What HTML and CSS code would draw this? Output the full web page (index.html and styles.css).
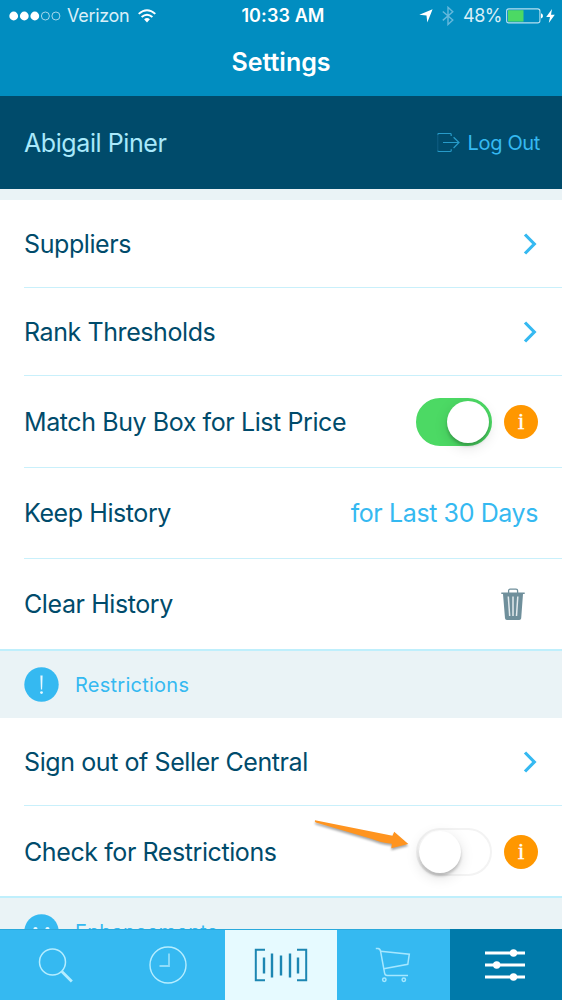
FILE: index.html
```html
<!DOCTYPE html>
<html lang="en">
<head>
  <meta charset="UTF-8">
  <title>Settings</title>
  <link rel="stylesheet" href="styles.css">
</head>
<body>
<div class="app">
  <header class="header">
    <div class="status">
      <div class="status-left">
        <svg class="signal" width="52" height="10" viewBox="0 0 52 10">
          <g fill="#fff"><circle cx="4.7" cy="5" r="4.4"/><circle cx="15.3" cy="5" r="4.4"/><circle cx="25.8" cy="5" r="4.4"/></g>
          <g fill="none" stroke="#b5dff0" stroke-width="0.9"><circle cx="36.4" cy="5" r="4"/><circle cx="46.9" cy="5" r="4"/></g>
        </svg>
        <span class="carrier">Verizon</span>
        <svg class="wifi" width="18" height="14" viewBox="0 0 18 14">
          <g fill="none" stroke="#fff" stroke-width="1.9"><path d="M0.7 4.9Q9 -2.6 17.3 4.9"/><path d="M3.6 8Q9 3.3 14.4 8"/></g>
          <path d="M6.1 10.3Q9 7.7 11.9 10.3L9 13.5z" fill="#fff"/>
        </svg>
      </div>
      <span class="time">10:33 AM</span>
      <div class="status-right">
        <svg width="14" height="14" viewBox="0 0 14 14"><path d="M13.6 0.3L8.3 13.6L7.5 6.6L0.3 5.8z" fill="#fff"/></svg>
        <svg class="bluetooth" width="12" height="20" viewBox="0 0 12 20"><path d="M0.8 5.5L10.8 14L6 18.5V1.3L10.8 5.8L0.8 14.4" fill="none" stroke="#66b9dc" stroke-width="1.4"/></svg>
        <span class="percent">48%</span>
        <svg class="battery" width="37" height="16" viewBox="0 0 37 16">
          <rect x="0.6" y="0.9" width="33.3" height="14" rx="2.2" fill="none" stroke="#b5dff0" stroke-width="1.1"/>
          <rect x="2" y="2.2" width="15.5" height="11.4" fill="#4cd964"/>
          <path d="M35 5.3Q37 6 37 7.9T35 10.5z" fill="#fff"/>
        </svg>
        <svg class="bolt" width="9" height="14" viewBox="0 0 9 14"><path d="M6 0L0.2 8H4L2.8 14L8.8 5.7H5z" fill="#fff"/></svg>
      </div>
    </div>
    <h1 class="title">Settings</h1>
  </header>

  <div class="user">
    <span class="user-name">Abigail Piner</span>
    <a class="logout">
      <svg width="23" height="20" viewBox="0 0 23 20" fill="none" stroke="#279bc9">
        <path d="M14.2 3V1.8Q14.2 0.5 13 0.5H2Q0.8 0.5 0.8 1.8M0.8 17.4Q0.8 18.5 2 18.5H13Q14.2 18.5 14.2 17.4V16.3" stroke-width="1.2"/>
        <path d="M0.8 1.8V17.4" stroke="#14638a" stroke-width="0.8"/>
        <path d="M6 9.5H22M16.6 4.2L22 9.5L16.6 15" stroke-width="1.2"/>
      </svg>
      <span>Log Out</span>
    </a>
  </div>

  <main class="list">
    <div class="row">
      <span class="label">Suppliers</span>
      <svg class="chevron" width="14" height="22" viewBox="0 0 14 22"><path d="M2 1.5L11.3 11L2 20.5"/></svg>
    </div>
    <div class="row">
      <span class="label">Rank Thresholds</span>
      <svg class="chevron" width="14" height="22" viewBox="0 0 14 22"><path d="M2 1.5L11.3 11L2 20.5"/></svg>
    </div>
    <div class="row tall">
      <span class="label">Match Buy Box for List Price</span>
      <div class="controls">
        <span class="switch on"><span class="knob"></span></span>
        <span class="info slab">i</span>
      </div>
    </div>
    <div class="row keep-row">
      <span class="label">Keep History</span>
      <span class="value">for Last 30 Days</span>
    </div>
    <div class="row last">
      <span class="label">Clear History</span>
      <svg class="trash" width="24" height="33" viewBox="0 0 24 33">
        <path d="M7.6 5V2.8Q7.6 1.2 9.2 1.2H15Q16.6 1.2 16.6 2.8V5" fill="none" stroke="#6f8f9b" stroke-width="1.3"/>
        <path d="M0.3 4.5H23.7V6H22L20.2 30.2Q20 32 18.3 32H5.9Q4.2 32 4 30.2L2 6H0.3z" fill="#6f8f9b"/>
        <path d="M7.3 8.5L8.7 28M12 8.5V28M16.8 8.5L15.5 28" stroke="#e3eaed" stroke-width="1.5"/>
      </svg>
    </div>

    <div class="section">
      <svg class="section-icon" width="35" height="35" viewBox="0 0 35 35">
        <circle cx="17.5" cy="17.5" r="17.2" fill="#35b9f1"/>
        <path d="M16.4 8.5H18.6L18.1 22.4H16.9z" fill="#e6f8ff"/>
        <circle cx="17.5" cy="25.6" r="1.4" fill="#e6f8ff"/>
      </svg>
      <span class="section-title">Restrictions</span>
    </div>
    <div class="row">
      <span class="label">Sign out of Seller Central</span>
      <svg class="chevron" width="14" height="22" viewBox="0 0 14 22"><path d="M2 1.5L11.3 11L2 20.5"/></svg>
    </div>
    <div class="row last check-row">
      <span class="label">Check for Restrictions</span>
      <div class="controls">
        <span class="switch"><span class="knob"></span></span>
        <span class="info">i</span>
      </div>
      <svg class="pointer" width="98" height="34" viewBox="0 0 98 34"><path d="M1 2.2L78.5 17.8L80.2 13.8L94.3 26L77.3 30.2L77.8 25.8Q66 24.5 58 21L1.8 4.6Q0.3 3.5 1 2.2z" fill="#ff941f"/></svg>
    </div>
    <div class="section">
      <svg class="section-icon" width="35" height="35" viewBox="0 0 35 35">
        <circle cx="17.5" cy="17.5" r="17.2" fill="#35b9f1"/>
        <circle cx="11.5" cy="15" r="2.1" fill="#e6f8ff"/><circle cx="23.5" cy="15" r="2.1" fill="#e6f8ff"/>
      </svg>
      <span class="section-title">Enhancements</span>
    </div>
  </main>

  <nav class="tabs">
    <a class="tab">
      <svg width="36" height="36" viewBox="0 0 36 36" fill="none" stroke="#b5edff"><circle cx="14.5" cy="15" r="13" stroke-width="1.5"/><path d="M23.8 24.5L33.8 34.5" stroke-width="2.8"/></svg>
    </a>
    <a class="tab">
      <svg width="38" height="38" viewBox="0 0 38 38" fill="none" stroke="#b5edff" stroke-width="1.4"><circle cx="19" cy="19" r="18"/><path d="M20 7.5V20H10.5" stroke="#8fdcfa" stroke-width="1.8"/></svg>
    </a>
    <a class="tab scan">
      <svg width="54" height="34" viewBox="0 0 54 34" fill="none" stroke="#1c86b2" stroke-width="2"><path d="M11 1.8H1.8V32.2H11M43 1.8H52.2V32.2H43"/><path d="M10 9.5V25.5M18 5.5V29.5M27 7.5V27.5M36 5.5V29.5M44 9.5V25.5" stroke-width="2.4"/></svg>
    </a>
    <a class="tab">
      <svg width="36" height="36" viewBox="0 0 36 36" fill="none" stroke="#a5e7ff" stroke-width="1.5"><path d="M0.8 1.5H3Q5.2 1.8 5.6 4.3L9.6 26.2Q10 28.5 12.2 28.5H33"/><path d="M5.6 4.2L34.3 7.2L32.8 17.3L8.7 21.7"/><circle cx="9.3" cy="32.8" r="1.7"/><circle cx="28.8" cy="32.8" r="1.7"/></svg>
    </a>
    <a class="tab current">
      <svg width="40" height="32" viewBox="0 0 40 32" fill="#fff"><path d="M0 4H40M0 16H40M0 28H40" stroke="#fff" stroke-width="3"/><circle cx="28.5" cy="4" r="3.7"/><circle cx="11.7" cy="16" r="3.7"/><circle cx="28.5" cy="28" r="3.7"/></svg>
    </a>
  </nav>
</div>
</body>
</html>
```

FILE: styles.css
```css
* { box-sizing: border-box; }
body { margin: 0; font-family: Inter, Roboto, sans-serif; color: #004b6b; background: #fff; }
svg { display: block; flex: none; }
.app { width: 562px; height: 1000px; display: flex; flex-direction: column; overflow: hidden; }

.header { height: 96px; flex: none; background: #018dc0; color: #fff; }
.status { height: 31px; display: grid; grid-template-columns: 1fr auto 1fr; align-items: center; font-size: 18px; line-height: 31px; }
.status-left { display: flex; align-items: center; padding-left: 9px; }
.carrier { margin-left: 6px; color: #d9eff8; letter-spacing: -0.3px; }
.wifi { margin-left: 9px; }
.time { font-weight: 600; letter-spacing: 0.1px; padding-left: 4px; }
.status-right { display: flex; align-items: center; justify-content: flex-end; padding-right: 7px; }
.bluetooth { margin-left: 9px; }
.percent { margin-left: 9px; color: #d9eff8; letter-spacing: -0.5px; }
.battery { margin-left: 4px; }
.bolt { margin-left: 3px; }
.title { margin: 0; font-size: 25px; font-weight: 600; line-height: 62px; text-align: center; }

.user { height: 93px; flex: none; display: flex; align-items: center; justify-content: space-between; padding: 0 22px 0 24px; background: #004b6b; }
.user-name { font-size: 25px; letter-spacing: -0.42px; color: #a9e9fb; }
.logout { display: flex; align-items: center; gap: 8px; font-size: 20px; letter-spacing: -0.35px; color: #35b9f1; }

.list { flex: 1; min-height: 0; overflow: hidden; padding-top: 11px; background: #eaf3f6; }
.row { position: relative; height: 88px; display: flex; align-items: center; justify-content: space-between; padding: 0 24px; background: #fff linear-gradient(#c9f0fb, #c9f0fb) 24px 100% / 100% 1px no-repeat; }
.row.tall { height: 92px; }
.row.keep-row { height: 91px; padding-bottom: 1px; }
.row.last { height: 91px; background: #fff; border-bottom: 1px solid #bfeffc; }
.row.check-row { padding-top: 2px; }
.label { font-size: 25px; letter-spacing: -0.41px; white-space: nowrap; }
.value { font-size: 25px; letter-spacing: -0.4px; color: #35b9f1; }
.chevron { margin-right: 1px; fill: none; stroke: #35b9f1; stroke-width: 3.2; }
.trash { margin-right: 13px; }

.controls { display: flex; align-items: center; gap: 12px; }
.switch { width: 76px; height: 48px; border: 2px solid #f3f3f3; border-radius: 24px; display: flex; align-items: center; }
.switch.on { border-color: #4cd964; background: #4cd964; justify-content: flex-end; }
.knob { width: 42px; height: 42px; margin: 0 1px; border-radius: 50%; background: #fff; box-shadow: 0 3px 3px rgba(0, 0, 0, 0.2), 0 4px 14px rgba(0, 0, 0, 0.13); }
.info { width: 34px; height: 34px; border-radius: 50%; background: #ff9700; color: #fff; font: 24px/33px "Liberation Serif", serif; -webkit-text-stroke: 0.3px #fff; text-align: center; }
/* callout arrow lies over the row */
.pointer { position: absolute; left: 314px; top: 12px; filter: drop-shadow(0 2px 1px rgba(0, 0, 0, 0.35)); }

.section { height: 68px; border-top: 1px solid #bfeffc; display: flex; align-items: center; gap: 16px; padding-left: 24px; font-size: 20px; color: #35b9f1; }
.section-title { letter-spacing: 0.25px; }

.tabs { height: 71px; flex: none; display: flex; }
.tab { flex: 0 0 20%; display: flex; align-items: center; justify-content: center; padding-right: 1px; background: #35b9f1; border-top: 1px solid #2aa9dc; }
.tab.scan { padding-right: 0; background: #e6faff; }
.tab.current { background: #007aaa; border-color: #007aaa; }
```
